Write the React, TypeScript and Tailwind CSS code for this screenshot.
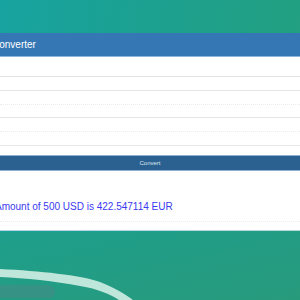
import React from "react";

export default function App() {
  return (
    <div
      className="relative w-[300px] h-[300px] overflow-hidden bg-[linear-gradient(100deg,#17a3a0_0%,#1ea08c_55%,#24a07c_100%)]"
      style={{ fontFamily: '"Liberation Sans", Arial, sans-serif' }}
    >
      {/* bottom decoration */}
      <svg className="absolute left-0 top-[232px]" width="300" height="68" viewBox="0 0 300 68">
        <defs>
          <linearGradient id="bg2" x1="0" y1="0" x2="1" y2="1">
            <stop offset="0" stopColor="#1e9f8c" />
            <stop offset="1" stopColor="#289a7c" />
          </linearGradient>
        </defs>
        <rect width="300" height="68" fill="url(#bg2)" />
        <path d="M0 37 C40 39 80 43 100 50 C115 56 125 62 133 68 L119 68 C110 62 98 57 80 54 C55 49 25 46 0 45 Z" fill="#bfe6da" />
        <path d="M0 53 L45 53 C55 53 58 59 52 66 L0 66 Z" fill="#3f8f84" opacity="0.7" />
      </svg>

      <div className="relative flex flex-col">
        <div className="h-[33px]" />
        <div className="h-[24px] bg-[#3577b4] border-b border-[#8fb5dc] flex items-center">
          <span className="ml-[-8px] text-[10px] text-white leading-none whitespace-nowrap">Converter</span>
        </div>
        <div className="bg-white flex flex-col">
          <div className="h-[20px] border-b border-[#e4e4e4]" />
          <div className="h-[14px] border-b border-[#e4e4e4]" />
          <div className="h-[14px] border-b border-dotted border-[#ececec]" />
          <div className="h-[13px] border-b border-[#e4e4e4]" />
          <div className="h-[14px] border-b border-dotted border-[#ececec]" />
          <div className="h-[14px] border-b border-[#e8e8e8]" />
          <div className="h-[9px]" />
          <div className="h-[16px] bg-[#2b6190] border-y border-[#8db0d2] flex items-center justify-center">
            <span className="text-[6px] text-[#dfe8f2] leading-none">Convert</span>
          </div>
          <div className="h-[30px]" />
          <div className="h-[12px] flex items-center">
            <span className="ml-[-5px] text-[10px] text-[#3a3af2] leading-none whitespace-nowrap">
              Amount of 500 USD is 422.547114 EUR
            </span>
          </div>
          <div className="h-[9px] border-b border-dotted border-[#ececec]" />
          <div className="h-[9px] border-b border-[#b8d4e0]" />
        </div>
      </div>
    </div>
  );
}
